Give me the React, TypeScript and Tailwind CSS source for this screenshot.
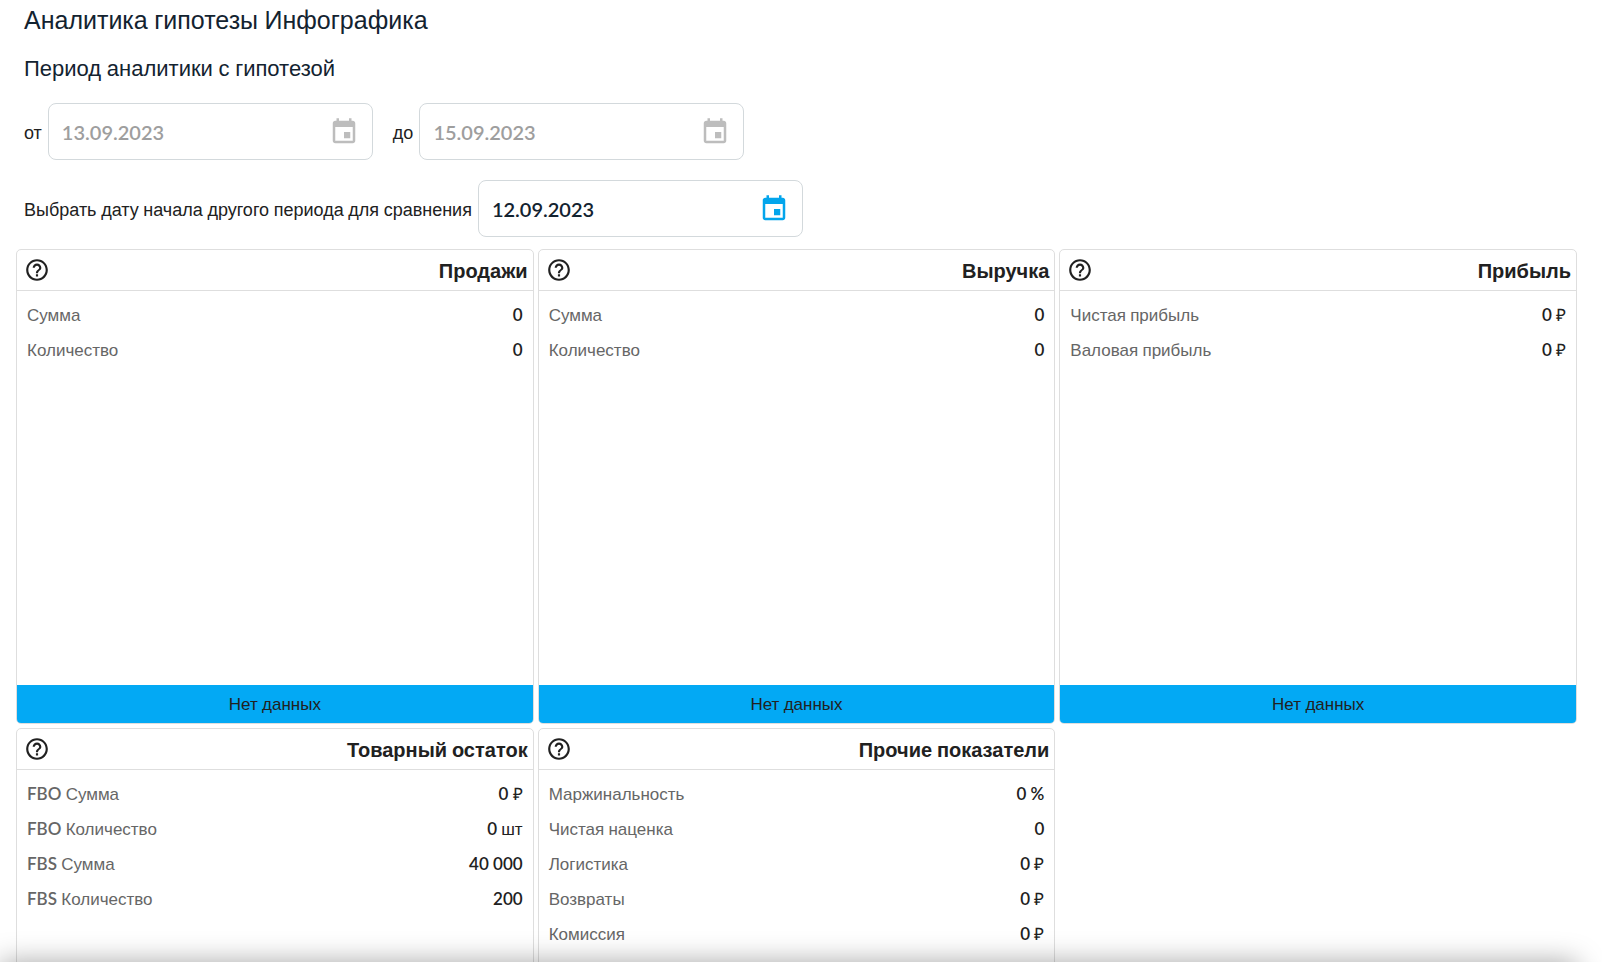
import { Fragment } from "react";

const CYRILLIC = /([А-Яа-яЁё₽]+)/;

function Mixed({ children }: { children: string }) {
  return (
    <>
      {children.split(CYRILLIC).map((part, i) =>
        i % 2 ? (
          <span key={i} className="font-['Liberation_Sans',sans-serif] leading-none">{part}</span>
        ) : (
          <Fragment key={i}>{part}</Fragment>
        ),
      )}
    </>
  );
}

function CalendarIcon() {
  return (
    <svg viewBox="0 0 24 24" className="size-[30px] fill-current" aria-hidden="true">
      <path d="M19 3h-1V1h-2v2H8V1H6v2H5c-1.110 0-1.990.9-1.990 2L3 19c0 1.100.89 2 2 2h14c1.100 0 2-.9 2-2V5c0-1.100-.9-2-2-2zm0 16H5V8h14v11zm-7-7h5v5h-5z" />
    </svg>
  );
}

function HelpIcon() {
  return (
    <svg viewBox="0 0 24 24" className="size-[26px] fill-current" aria-hidden="true">
      <path d="M11 18h2v-2h-2v2zm1-16C6.480 2 2 6.480 2 12s4.480 10 10 10 10-4.480 10-10S17.520 2 12 2zm0 18c-4.410 0-8-3.590-8-8s3.590-8 8-8 8 3.590 8 8-3.590 8-8 8zm0-14c-2.210 0-4 1.790-4 4h2c0-1.100.9-2 2-2s2 .9 2 2c0 2-3 1.750-3 5h2c0-2.250 3-2.500 3-5 0-2.210-1.790-4-4-4z" />
    </svg>
  );
}

function DateField({ id, label, value, disabled = false }: { id: string; label: string; value: string; disabled?: boolean }) {
  return (
    <div className="flex items-center gap-[6px]">
      <label htmlFor={id} className="text-[18px] leading-6 text-[#212121]">
        <Mixed>{label}</Mixed>
      </label>
      <div className="flex h-[57px] w-[325px] items-center rounded-lg border border-[#d3d9dc] px-[13px]">
        <input
          id={id}
          type="text"
          defaultValue={value}
          disabled={disabled}
          className="min-w-0 flex-1 bg-transparent text-[20px] leading-6 font-semibold text-[#132330] outline-none disabled:text-[#9e9e9e]"
        />
        <button
          type="button"
          disabled={disabled}
          aria-label="Выбрать дату"
          className="text-[#03a5ec] disabled:text-[#bdbdbd]"
        >
          <CalendarIcon />
        </button>
      </div>
    </div>
  );
}

type Metric = { title: string; rows: [string, string][]; empty?: boolean };

const metrics: Metric[] = [
  { title: "Продажи", rows: [["Сумма", "0"], ["Количество", "0"]], empty: true },
  { title: "Выручка", rows: [["Сумма", "0"], ["Количество", "0"]], empty: true },
  { title: "Прибыль", rows: [["Чистая прибыль", "0 ₽"], ["Валовая прибыль", "0 ₽"]], empty: true },
  {
    title: "Товарный остаток",
    rows: [["FBO Сумма", "0 ₽"], ["FBO Количество", "0 шт"], ["FBS Сумма", "40 000"], ["FBS Количество", "200"]],
  },
  {
    title: "Прочие показатели",
    rows: [["Маржинальность", "0 %"], ["Чистая наценка", "0"], ["Логистика", "0 ₽"], ["Возвраты", "0 ₽"], ["Комиссия", "0 ₽"]],
  },
];

function CellText({ children }: { children: string }) {
  return (
    <>
      {children.split(CYRILLIC).map((part, i) =>
        i % 2 ? (
          <span key={i} className="font-['Liberation_Sans',sans-serif] leading-none font-normal">{part}</span>
        ) : (
          <Fragment key={i}>{part}</Fragment>
        ),
      )}
    </>
  );
}

function MetricCard({ title, rows, empty }: Metric) {
  return (
    <section className="flex min-h-[475px] flex-col overflow-hidden rounded-[5px] border border-[#dedede]">
      <header className="flex h-[41px] shrink-0 items-center justify-between border-b border-[#dedede] pr-[5px] pl-[7px]">
        <button type="button" aria-label="Справка" className="text-[#212121]">
          <HelpIcon />
        </button>
        <h3 className="text-[20px] leading-6 font-bold text-[#212121]">
          <Mixed>{title}</Mixed>
        </h3>
      </header>
      <table className="mt-[6px] w-full text-[17px] leading-6 font-semibold">
        <tbody>
          {rows.map(([name, value]) => (
            <tr key={name} className="h-[35px]">
              <th scope="row" className="pl-[10px] text-left font-semibold text-[#666]">
                <CellText>{name}</CellText>
              </th>
              <td className="pr-[10px] text-right text-[#212121]">
                <CellText>{value}</CellText>
              </td>
            </tr>
          ))}
        </tbody>
      </table>
      {empty && (
        <p className="mt-auto bg-[#03a9f4] py-[7px] text-center text-[17px] leading-6 text-[#212121]">
          <Mixed>Нет данных</Mixed>
        </p>
      )}
    </section>
  );
}

export default function App() {
  return (
    <div className="relative h-screen overflow-hidden bg-white font-[Lato,sans-serif]">
      <main>
        <div className="px-6 pt-[3px]">
          <h1 className="text-[25px] leading-8 text-[#132330]">
            <Mixed>Аналитика гипотезы Инфографика</Mixed>
          </h1>
          <h2 className="mt-[17px] text-[22px] leading-8 text-[#132330]">
            <Mixed>Период аналитики с гипотезой</Mixed>
          </h2>
          <div className="mt-[19px] flex gap-5">
            <DateField id="from" label="от" value="13.09.2023" disabled />
            <DateField id="to" label="до" value="15.09.2023" disabled />
          </div>
          <div className="mt-5">
            <DateField id="compare" label="Выбрать дату начала другого периода для сравнения" value="12.09.2023" />
          </div>
        </div>
        <div className="mt-3 mr-[25px] ml-4 grid grid-cols-3 gap-1">
          {metrics.map((metric) => (
            <MetricCard key={metric.title} {...metric} />
          ))}
        </div>
      </main>
      <div className="pointer-events-none absolute top-full right-[25px] left-0 h-10 shadow-[0_0_28px_rgba(0,0,0,0.35)]" />
    </div>
  );
}
